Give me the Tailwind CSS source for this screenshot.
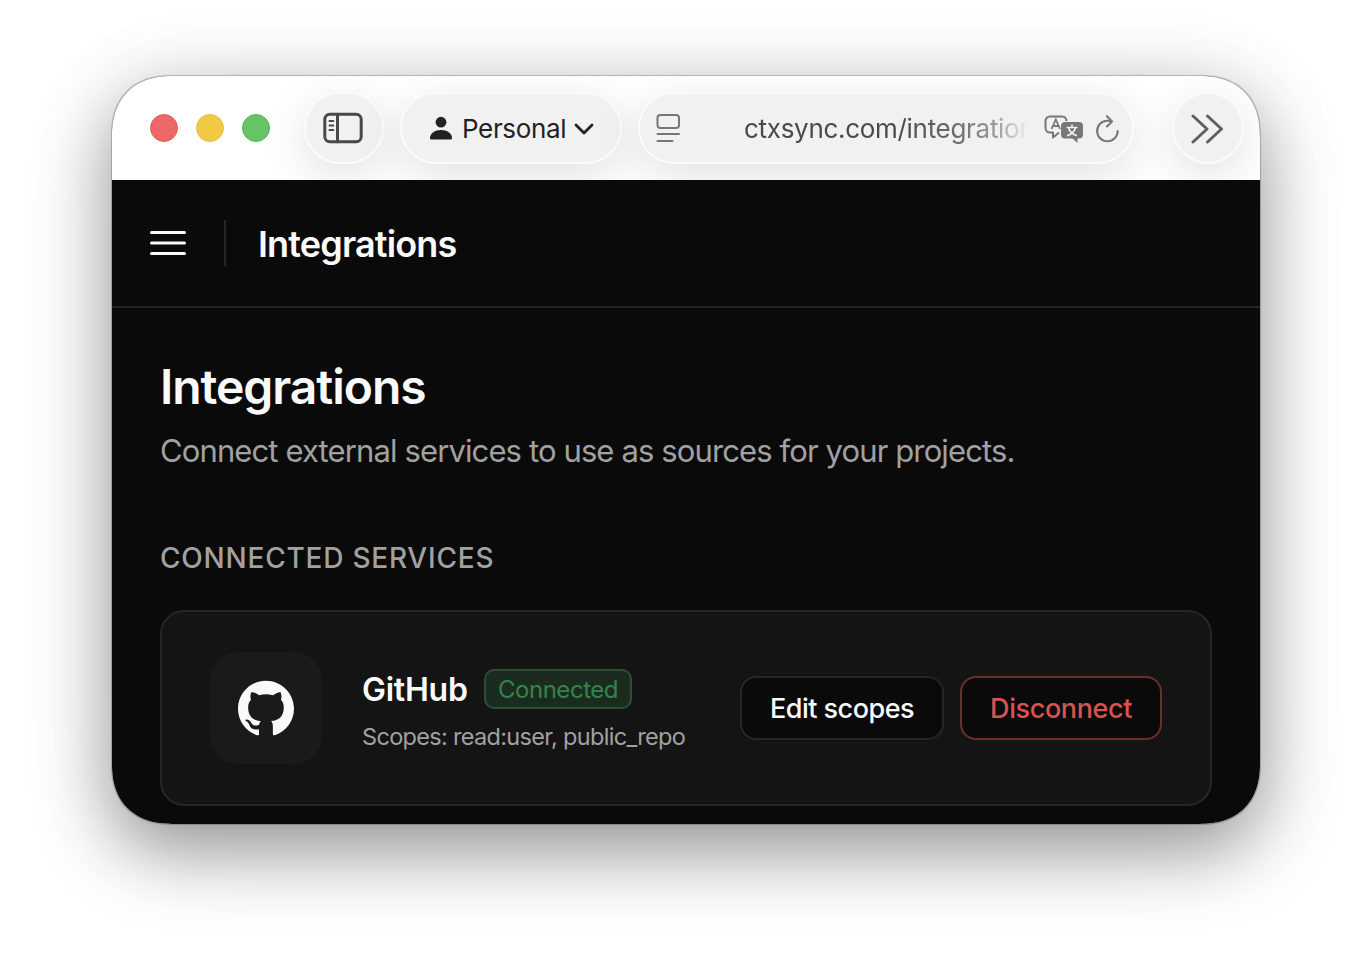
<!DOCTYPE html>
<html lang="en">
<head>
  <meta charset="UTF-8" />
  <title>Integrations</title>
  <script src="https://cdn.jsdelivr.net/npm/@tailwindcss/browser@4"></script>
</head>
<body class="bg-white w-[1372px] h-[972px] overflow-hidden px-28 pt-[76px] font-['Inter',sans-serif]">
  <div class="w-[1148px] h-[748px] rounded-[60px] [corner-shape:superellipse(1.2)] shadow-[0_0_0_1px_rgba(0,0,0,0.2),0_26px_74px_rgba(0,0,0,0.41),0_10px_110px_rgba(0,0,0,0.06)]">
    <div class="w-full h-full rounded-[60px] [corner-shape:superellipse(1.2)] overflow-hidden bg-[#0a0a0a]">

      <!-- Browser toolbar -->
      <div class="h-[104px] bg-white overflow-hidden flex items-center pl-[38px] pr-4">
        <div class="flex gap-[18px]">
          <div class="size-7 rounded-full bg-[#ec6765] border border-[#e05f5d]"></div>
          <div class="size-7 rounded-full bg-[#f2c944] border border-[#e3bd40]"></div>
          <div class="size-7 rounded-full bg-[#65c466] border border-[#55b557]"></div>
        </div>

        <div class="ml-[34px] w-20 h-[72px] rounded-full bg-[#f1f1f1] border-2 border-[#fbfbfb] shadow-[0_12px_46px_rgba(0,0,0,0.12)] flex items-center justify-center">
          <svg class="mr-0.5 w-10 h-8" viewBox="0 0 40 32" fill="none" stroke="#484848" stroke-width="3" stroke-linecap="round">
            <rect x="1.8" y="2.3" width="36.4" height="27.4" rx="5" />
            <path d="M14.5 2.3v27.4" />
            <path d="M6.5 9h3.8M6.5 13.5h3.8M6.5 18h3.8" stroke-width="2" />
          </svg>
        </div>

        <div class="ml-4 w-[222px] h-[72px] rounded-full bg-[#f1f1f1] border-2 border-[#fbfbfb] shadow-[0_12px_46px_rgba(0,0,0,0.12)] flex items-center pl-[27px]">
          <svg class="w-6 h-6" viewBox="0 0 24 24" fill="#222">
            <circle cx="12" cy="6.2" r="5.4" />
            <path d="M1 22C1 17.5 6 14 12 14s11 3.500 11 8c0 1-.5 1.500-1.500 1.500h-19C1.500 23.500 1 23 1 22z" />
          </svg>
          <span class="ml-[9px] mt-px text-[26px] tracking-[-0.35px] text-[#222]">Personal</span>
          <svg class="ml-2 mt-px w-5 h-3" viewBox="0 0 20 12" fill="none" stroke="#222" stroke-width="2.8" stroke-linecap="round" stroke-linejoin="round"><path d="M2 2l8 8 8-8" /></svg>
        </div>

        <div class="ml-4 w-[496px] h-[72px] rounded-full bg-[#f1f1f1] border-2 border-[#fbfbfb] shadow-[0_12px_46px_rgba(0,0,0,0.12)] flex items-center pl-4">
          <svg class="w-6 h-7 shrink-0" viewBox="0 0 24 28" fill="none" stroke="#777" stroke-width="2" stroke-linecap="round">
            <rect x="1.500" y="1" width="21.500" height="13" rx="3" />
            <path d="M1.500 20H23M1.500 27h15" />
          </svg>
          <div class="ml-16 mt-px w-[282px] shrink-0 whitespace-nowrap text-[26px] tracking-[-0.3px] text-[#4a4a4a] [mask-image:linear-gradient(to_right,black_55%,rgba(0,0,0,0.8)_75%,rgba(0,0,0,0.5)_90%,transparent_101%)]">ctxsync.com/integration</div>
          <svg class="ml-[18px] mt-px w-10 h-7 shrink-0" viewBox="0 0 40 28" fill="none">
            <path d="M15 17.500l-6 5v-5H6a4.500 4.500 0 0 1-4.500-4.500V6A4.500 4.500 0 0 1 6 1.500h12A4.500 4.500 0 0 1 22.500 6" stroke="#777" stroke-width="2" stroke-linejoin="round" />
            <path d="M7.500 14L11.800 4.500 16 14M9 11h5.500" stroke="#777" stroke-width="1.800" />
            <path d="M21 7h14a4 4 0 0 1 4 4v8.500a4 4 0 0 1-4 4h-1.500V28l-5-4.500H21a4 4 0 0 1-4-4V11a4 4 0 0 1 4-4z" fill="#777" />
            <path d="M28 9.500v2.500M22.500 12.500h11M31.500 12.500c-1 4-4.500 7-8.500 8.200M24.500 12.500c1 4 4.500 7 8.500 8.200" stroke="#f1f1f1" stroke-width="1.600" />
          </svg>
          <svg class="ml-[11px] mt-px w-6 h-7 shrink-0" viewBox="0 0 24 28" fill="none" stroke="#777" stroke-width="2.100" stroke-linecap="round" stroke-linejoin="round">
            <path d="M22.700 16A10.300 10.300 0 1 1 12.400 5.700c1.500 0 2.700.2 4 .700" />
            <path d="M12 1.200l5 5.200-5 5" />
          </svg>
        </div>

        <div class="ml-auto size-[72px] rounded-full bg-[#f1f1f1] border-2 border-[#fbfbfb] shadow-[0_12px_46px_rgba(0,0,0,0.12)] flex items-center justify-center">
          <svg class="mr-0.5 mt-0.5 w-8 h-[30px]" viewBox="0 0 32 30" fill="none" stroke="#606060" stroke-width="3" stroke-linecap="round" stroke-linejoin="round">
            <path d="M2 2l14 13L2 28M16.500 2l14 13-14 13" />
          </svg>
        </div>
      </div>

      <!-- App header -->
      <header class="h-32 border-b-2 border-[#262626] flex items-center px-[38px]">
        <svg class="w-9 h-6" viewBox="0 0 36 24" stroke="#fafafa" stroke-width="3" stroke-linecap="round"><path d="M1.500 1.500h33M1.500 12h33M1.500 22.500h33" /></svg>
        <div class="ml-[38px] w-0.5 h-[46px] bg-[#262626]"></div>
        <div class="ml-8 mt-0.5 text-[36px] font-semibold tracking-[-0.85px] text-[#fafafa]">Integrations</div>
      </header>

      <main class="px-12 pt-[49px]">
        <h1 class="text-[48px] leading-[60px] font-semibold tracking-[-1.05px] text-[#fafafa]">Integrations</h1>
        <p class="mt-[9px] text-[31px] leading-[50px] whitespace-nowrap tracking-[-0.88px] text-[#a1a1a1]">Connect external services to use as sources for your projects.</p>
        <h2 class="mt-[62px] text-[28px] leading-10 font-medium whitespace-nowrap tracking-[0.78px] text-[#a1a1a1]">CONNECTED SERVICES</h2>

        <div class="mt-8 h-[196px] rounded-3xl border-2 border-[#262626] bg-[#141414] flex items-center px-12">
          <div class="size-28 shrink-0 rounded-[28px] bg-[#1a1a1a] flex items-center justify-center">
            <svg class="size-14" viewBox="0 0 24 24" fill="#fafafa"><path d="M12 .297c-6.630 0-12 5.373-12 12 0 5.303 3.438 9.800 8.205 11.385.6.113.82-.258.82-.577 0-.285-.01-1.040-.015-2.040-3.338.724-4.042-1.610-4.042-1.610C4.422 18.070 3.633 17.700 3.633 17.700c-1.087-.744.084-.729.084-.729 1.205.084 1.838 1.236 1.838 1.236 1.070 1.835 2.809 1.305 3.495.998.108-.776.417-1.305.76-1.605-2.665-.3-5.466-1.332-5.466-5.930 0-1.310.465-2.380 1.235-3.220-.135-.303-.54-1.523.105-3.176 0 0 1.005-.322 3.300 1.230.96-.267 1.980-.399 3-.405 1.020.006 2.040.138 3 .405 2.280-1.552 3.285-1.230 3.285-1.230.645 1.653.24 2.873.12 3.176.765.840 1.230 1.910 1.230 3.220 0 4.610-2.805 5.625-5.475 5.920.42.36.81 1.096.81 2.220 0 1.606-.015 2.896-.015 3.286 0 .315.21.69.825.57C20.565 22.092 24 17.592 24 12.297c0-6.627-5.373-12-12-12" /></svg>
          </div>
          <div class="ml-10 mt-2">
            <div class="h-10 flex items-center">
              <span class="w-[122px] pt-0.5 text-[32px] leading-10 font-semibold tracking-[-0.25px] text-[#fafafa]">GitHub</span>
              <span class="w-[148px] h-10 pt-0.5 rounded-[10px] border-2 border-[#2b4f33] bg-[#1c2b1f] flex items-center justify-center text-[24px] tracking-[-0.45px] text-[#35834a]">Connected</span>
            </div>
            <div class="mt-2.5 text-[23.5px] leading-9 whitespace-nowrap tracking-[-0.68px] text-[#a1a1a1]">Scopes: read:user, public_repo</div>
          </div>
          <div class="ml-auto flex gap-4">
            <button class="w-[204px] h-16 pt-0.5 rounded-2xl border-2 border-[#262626] bg-[#0a0a0a] text-[27px] font-medium whitespace-nowrap tracking-[-0.5px] text-[#fafafa]">Edit scopes</button>
            <button class="w-[202px] h-16 pt-0.5 rounded-2xl border-2 border-[#6c2f2c] bg-[#0a0a0a] text-[27px] font-medium whitespace-nowrap tracking-[-0.4px] text-[#d9534f]">Disconnect</button>
          </div>
        </div>
      </main>
    </div>
  </div>
</body>
</html>
